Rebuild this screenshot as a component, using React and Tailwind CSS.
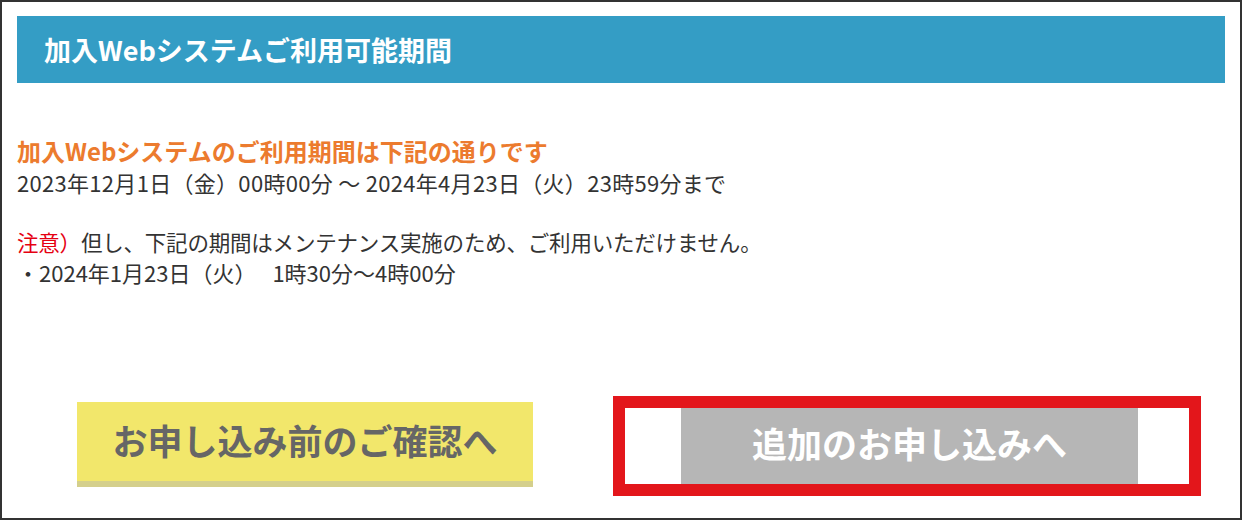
export default function App() {
  const jp = { fontFamily: '"Noto Sans CJK JP", "Noto Sans", sans-serif' };

  return (
    <div className="w-[1242px] h-[520px] bg-white border-2 border-[#333] px-[15px] pt-[14px]" style={jp}>
      <div className="h-[67px] bg-[#349dc5] flex items-center pl-[27px]">
        <h2 className="text-white text-[27px] font-bold leading-none">加入Webシステムご利用可能期間</h2>
      </div>

      <div className="mt-[52px] text-[#333]">
        <p className="text-[#ec7b2e] text-[24px] font-bold leading-[32px]">加入Webシステムのご利用期間は下記の通りです</p>
        <p className="text-[22px] leading-[30px] tracking-[0.3px]">2023年12月1日（金）00時00分 ～ 2024年4月23日（火）23時59分まで</p>
        <p className="text-[22px] leading-[30px]">&nbsp;</p>
        <p className="text-[21.5px] leading-[30px] tracking-[-0.2px]">
          <span className="text-[#e50012]">注意）</span>但し、下記の期間はメンテナンス実施のため、ご利用いただけません。
        </p>
        <p className="text-[22px] leading-[30px]">・2024年1月23日（火）　 1時30分～4時00分</p>
      </div>

      <div className="flex items-start mt-[109px]">
        <button className="ml-[60px] mt-[6px] w-[456px] h-[79px] bg-[#f2e76b] shadow-[0_6px_0_#d4cf8c] flex items-center justify-center">
          <span className="text-[#666] text-[35px] font-bold leading-none -mt-[4px]">お申し込み前のご確認へ</span>
        </button>
        <div className="ml-[80px] w-[588px] h-[100px] border-[12px] border-[#e3161b] bg-white pl-[56px]">
          <button className="w-[457px] h-full bg-[#b6b6b6] flex items-center justify-center">
            <span className="text-white text-[35px] font-bold leading-none -mt-[8px]">追加のお申し込みへ</span>
          </button>
        </div>
      </div>
    </div>
  );
}
